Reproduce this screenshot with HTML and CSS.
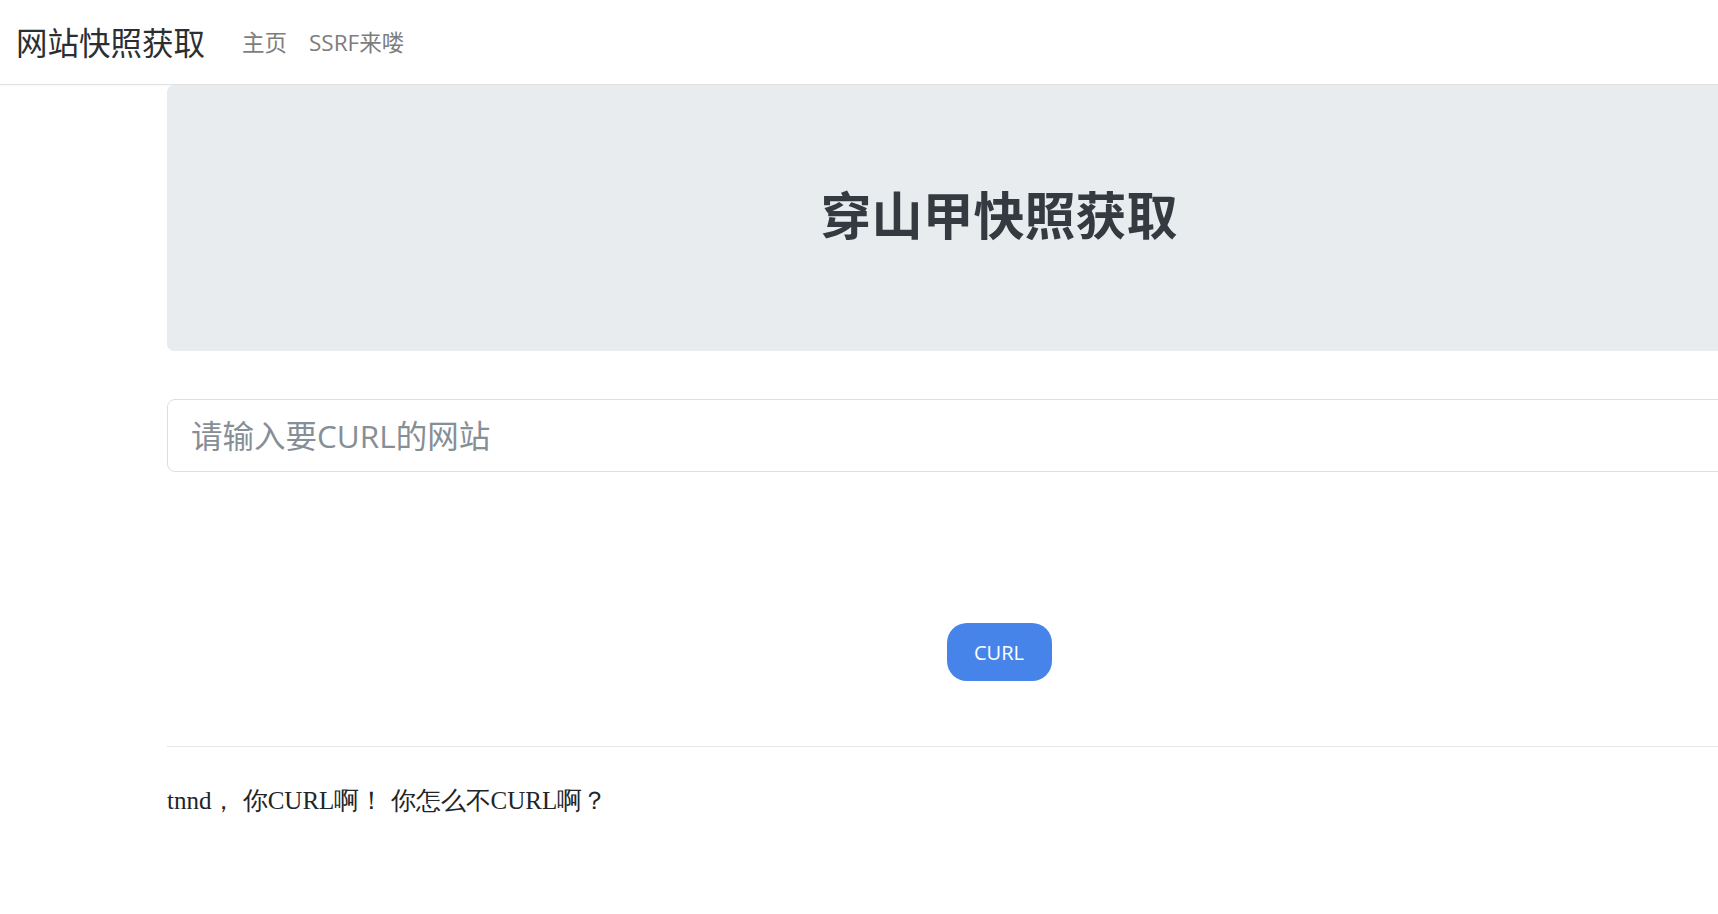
FILE: index.html
```html
<!DOCTYPE html>
<html lang="zh">
<head>
<meta charset="utf-8">
<title>网站快照获取</title>
<link rel="stylesheet" href="styles.css">
</head>
<body>
<nav class="navbar">
  <a class="brand" href="#">网站快照获取</a>
  <ul class="nav">
    <li><a class="nav-link" href="#">主页</a></li>
    <li><a class="nav-link" href="#">SSRF来喽</a></li>
  </ul>
</nav>
<main class="container">
  <section class="jumbotron">
    <h1 class="title">穿山甲快照获取</h1>
  </section>
  <form class="form">
    <input class="url-input" type="text" placeholder="请输入要CURL的网站">
    <div class="actions">
      <button class="btn" type="button">CURL</button>
    </div>
  </form>
  <hr class="divider">
  <p class="message">tnnd，&nbsp;你CURL啊！&nbsp;你怎么不CURL啊？</p>
</main>
</body>
</html>
```

FILE: styles.css
```css
html, body {
  margin: 0;
  padding: 0;
  overflow: hidden;
  background: #fff;
}

body {
  font-family: "Open Sans", "Noto Sans CJK SC", sans-serif;
  color: #212529;
}

.navbar {
  display: flex;
  align-items: center;
  height: 84px;
  padding: 0 16px;
  border-bottom: 1px solid #e1e1e1;
  box-shadow: 0 1px 2px rgba(0, 0, 0, 0.03);
}

.brand {
  font-family: "Noto Sans CJK SC", sans-serif;
  font-size: 31.5px;
  color: #2b2f33;
  text-decoration: none;
  margin-right: 26px;
  line-height: 1;
}

.nav {
  display: flex;
  list-style: none;
  margin: 0;
  padding: 2px 0 0;
}

.nav-link {
  display: block;
  padding: 0 11px;
  font-family: "Open Sans", "Noto Sans CJK SC", sans-serif;
  font-size: 22.5px;
  color: #7d7d7d;
  text-decoration: none;
  line-height: 1;
}

.container {
  width: 1664px;
  margin-left: 167px;
}

.jumbotron {
  height: 266px;
  background: #e9ecef;
  border-radius: 7px;
  display: flex;
  align-items: center;
  justify-content: center;
}

.title {
  margin: 0;
  font-family: "Noto Sans CJK SC", sans-serif;
  font-size: 51px;
  font-weight: 700;
  color: #343a40;
  line-height: 1;
  position: relative;
  top: -5px;
}

.form {
  margin-top: 48px;
}

.url-input {
  display: block;
  box-sizing: border-box;
  width: 100%;
  height: 73px;
  padding: 0 23px;
  border: 1px solid #dcdfe2;
  border-radius: 8px;
  font-family: "Open Sans", "Noto Sans CJK SC", sans-serif;
  font-size: 31.5px;
  color: #495057;
  outline: none;
}

.url-input::placeholder {
  color: #868e96;
}

.actions {
  display: flex;
  justify-content: center;
  margin-top: 151px;
}

.btn {
  width: 105px;
  height: 58px;
  border: none;
  border-radius: 20px;
  background: #4684ea;
  color: #fff;
  font-family: "Open Sans", "Noto Sans", sans-serif;
  font-size: 20px;
  padding: 0;
}

.divider {
  margin: 65px 0 0;
  border: 0;
  border-top: 1px solid #e6e6e6;
}

.message {
  margin: 35px 0 0;
  font-family: "Liberation Serif", serif;
  font-size: 25px;
  line-height: 38px;
  color: #212529;
}
```
